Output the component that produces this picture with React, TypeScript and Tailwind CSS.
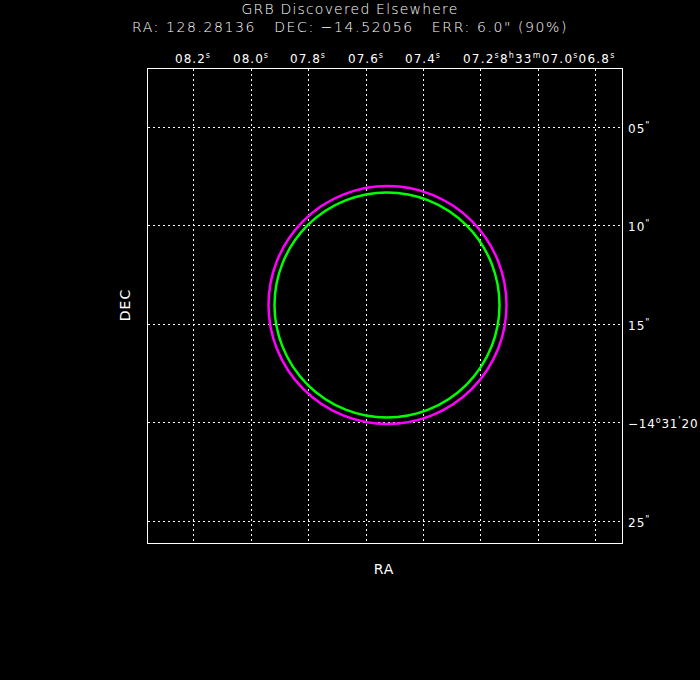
import React from 'react';

const xs = [193, 251, 308, 366, 423, 480, 538, 595];
const ys = [127, 225, 324, 422, 521];
const topLabels: [number, string, string][] = [
  [193, '08.2', 's'], [251, '08.0', 's'], [308, '07.8', 's'], [366, '07.6', 's'], [423, '07.4', 's'],
];
const font = '"DejaVu Sans", "Liberation Sans", sans-serif';

export default function App() {
  return (
    <div className="w-[700px] h-[680px] bg-black text-white flex flex-col items-center" style={{ fontFamily: font }}>
      <div className="pt-[1px] text-[14px] leading-[17px] text-center tracking-[1.2px] font-light">GRB Discovered Elsewhere</div>
      <div className="text-[14px] leading-[19px] text-center tracking-[1.6px] font-light">
        RA: 128.28136&nbsp;&nbsp; DEC: &minus;14.52056&nbsp;&nbsp; ERR: 6.0" (90%)
      </div>
      <svg width="700" height="643" viewBox="0 37 700 643" className="block" fontFamily={font}>
        {topLabels.map(([x, t, u]) => (
          <text key={x} x={x} y={63} fill="#fff" fontSize="12" textAnchor="middle" letterSpacing="1">
            {t}<tspan fontSize="8" dy="-5">{u}</tspan>
          </text>
        ))}
        <text x={463} y={63} fill="#fff" fontSize="12" letterSpacing="1.2">
          07.2<tspan fontSize="8" dy="-5">s</tspan><tspan dy="5">8</tspan><tspan fontSize="8" dy="-5">h</tspan><tspan dy="5">33</tspan><tspan fontSize="8" dy="-5">m</tspan><tspan dy="5">07.0</tspan><tspan fontSize="8" dy="-5">s</tspan><tspan dy="5">06.8</tspan><tspan fontSize="8" dy="-5">s</tspan>
        </text>
        <g stroke="#fff" strokeWidth="1" strokeDasharray="2 3">
          {xs.map((x) => <line key={x} x1={x + 0.5} y1={69} x2={x + 0.5} y2={543} />)}
          {ys.map((y) => <line key={y} x1={148} y1={y + 0.5} x2={623} y2={y + 0.5} />)}
        </g>
        <rect x={147.5} y={68.5} width={475} height={475} fill="none" stroke="#fff" strokeWidth="1" />
        <circle cx={387.5} cy={305} r={119} fill="none" stroke="#ff00ff" strokeWidth="2.5" />
        <circle cx={387} cy={305} r={112.5} fill="none" stroke="#00ff00" strokeWidth="2.5" />
        {[[127, '05'], [225, '10'], [324, '15'], [521, '25']].map(([y, t]) => (
          <text key={t} x={628} y={(y as number) + 6} fill="#fff" fontSize="12" letterSpacing="1">
            {t}<tspan fontSize="9" dy="-5">"</tspan>
          </text>
        ))}
        <text x={628} y={428} fill="#fff" fontSize="12" letterSpacing="0.8">
          &minus;14<tspan fontSize="8" dy="-5">o</tspan><tspan dy="5">31</tspan><tspan fontSize="9" dy="-5">'</tspan><tspan dy="5">20</tspan>
        </text>
        <text x={384} y={574} fill="#fff" fontSize="14" textAnchor="middle" letterSpacing="1">RA</text>
        <text x={0} y={0} fill="#fff" fontSize="14" textAnchor="middle" letterSpacing="1" transform="translate(130 305) rotate(-90)">DEC</text>
      </svg>
    </div>
  );
}
